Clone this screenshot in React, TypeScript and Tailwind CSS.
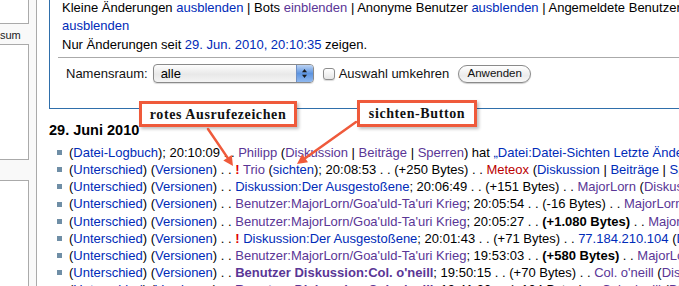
import type { ReactNode } from "react"

const blue = "text-[#002bb8]"
const visited = "text-[#5a3696]"
const red = "text-[#ba0000]"

function A({ children, c = blue, bold = false }: { children: ReactNode; c?: string; bold?: boolean }) {
  return <span className={`${c} ${bold ? "font-bold" : ""}`}>{children}</span>
}

function Bang() {
  return <span className="font-bold text-[#e00000]">!</span>
}

function Row({ children }: { children: ReactNode }) {
  return (
    <li className="flex items-center whitespace-nowrap">
      <span className="mr-[7px] h-[5px] w-[5px] shrink-0 bg-[#6f8ea6]" />
      <span>{children}</span>
    </li>
  )
}

// (Unterschied) (Versionen) . .
function Diff() {
  return (
    <>
      (<A>Unterschied</A>) (<A>Versionen</A>) . .{" "}
    </>
  )
}

function Tools({ c = blue }: { c?: string }) {
  return (
    <>
      (<A c={c}>Diskussion</A> | <A c={c}>Beiträge</A> | <A c={c}>Sperren</A>)
    </>
  )
}

function Callout({ text, className }: { text: string; className: string }) {
  return (
    <div
      className={`absolute flex items-center justify-center border-[3px] border-[#ef5a3b] bg-white shadow-[2px_2px_3px_rgba(0,0,0,0.25)] ${className}`}
    >
      <span className="font-['Liberation_Serif',serif] text-[14px] font-bold tracking-[0.6px] text-[#111]">{text}</span>
    </div>
  )
}

export default function App() {
  return (
    <div className="relative flex h-[286px] w-[679px] overflow-hidden bg-white font-['Liberation_Sans',Arial,sans-serif] text-[13px] text-black">
      {/* sidebar */}
      <div className="w-[37px] shrink-0 border-r border-[#aaa] bg-[#f9f9f9]">
        <div className="h-[24px] w-[29px] border-r border-b border-[#aaa] bg-white" />
        <div className="h-[20px] pt-[4px] text-[11px] leading-[14px] text-[#222]">sum</div>
        <div className="h-[116px] w-[29px] border border-l-0 border-[#aaa] bg-white" />
        <div className="h-[20px]" />
        <div className="h-[120px] w-[29px] border-t border-r border-[#aaa] bg-white" />
      </div>

      {/* content */}
      <div className="min-w-0 flex-1 pl-[12px]">
        <div className="w-[700px] border border-t-0 border-[#2f6fab] pr-2 pb-[25px] pl-[12px]">
          <div className="-mt-px whitespace-nowrap leading-[18px]">
            <div>
              Kleine Änderungen <A>ausblenden</A> | Bots <A c={visited}>einblenden</A> | Anonyme Benutzer{" "}
              <A>ausblenden</A> | Angemeldete Benutzer
            </div>
            <div>
              <A>ausblenden</A>
            </div>
            <div className="mt-px">
              Nur Änderungen seit <A>29. Jun. 2010, 20:10:35</A> zeigen.
            </div>
          </div>
          <div className="mt-[3px] -ml-[4px] h-px bg-[#aaa]" />
          <div className="mt-[6px] ml-[4px] flex h-[19px] items-center">
            <span className="text-[#111]">Namensraum:</span>
            <div className="ml-[5px] flex h-[19px] w-[161px] items-stretch overflow-hidden rounded-[4px] border border-[#8a8a8a] bg-[linear-gradient(#fdfdfd,#e8e8e8_55%,#f4f4f4)] shadow-[0_1px_1px_rgba(0,0,0,0.15)]">
              <span className="flex-1 pl-[7px] text-[13px] leading-[17px]">alle</span>
              <span className="flex w-[17px] items-center justify-center border-l border-[#6f8fc4] bg-[linear-gradient(#bcd3f3,#5d94e0_50%,#8fb8ef)]">
                <svg width="7" height="11" viewBox="0 0 7 11">
                  <path d="M3.5 1 L6 4.2 H1 Z" fill="#1a1a1a" />
                  <path d="M3.5 10 L6 6.8 H1 Z" fill="#1a1a1a" />
                </svg>
              </span>
            </div>
            <span className="ml-[9px] h-[12px] w-[12px] rounded-[3px] border border-[#8d8d8d] bg-[linear-gradient(#fff,#e6e6e6)] shadow-[0_1px_1px_rgba(0,0,0,0.15)]" />
            <span className="ml-[4px] text-[#111]">Auswahl umkehren</span>
            <button className="ml-[9px] flex h-[18px] w-[73px] items-center justify-center rounded-full border border-[#8a8a8a] bg-[linear-gradient(#ffffff,#ececec_60%,#f8f8f8)] text-[11.5px] text-[#111] shadow-[0_1px_1px_rgba(0,0,0,0.2)]">
              Anwenden
            </button>
          </div>
        </div>

        <h4 className="mt-[12px] text-[14.5px] leading-[18px] font-bold">29. Juni 2010</h4>

        <ul className="mt-[5px] ml-[8px] leading-[17.15px]">
          <Row>
            (<A>Datei-Logbuch</A>); 20:10:09 . . <A c={visited}>Philipp</A> <Tools c={visited} /> hat{" "}
            <A>„Datei:Datei-Sichten Letzte Änderungen.png“</A> hochgeladen
          </Row>
          <Row>
            <Diff />
            <Bang /> <A c={visited}>Trio</A> (<A>sichten</A>); 20:08:53 . . (+250 Bytes) . . <A c={red}>Meteox</A>{" "}
            <Tools />
          </Row>
          <Row>
            <Diff />
            <A>Diskussion:Der Ausgestoßene</A>; 20:06:49 . . (+151 Bytes) . . <A c={visited}>MajorLorn</A>{" "}
            <Tools c={visited} />
          </Row>
          <Row>
            <Diff />
            <A c={visited}>Benutzer:MajorLorn/Goa'uld-Ta'uri Krieg</A>; 20:05:54 . . (-16 Bytes) . .{" "}
            <A c={visited}>MajorLorn</A> <Tools c={visited} />
          </Row>
          <Row>
            <Diff />
            <A c={visited}>Benutzer:MajorLorn/Goa'uld-Ta'uri Krieg</A>; 20:05:27 . . <b>(+1.080 Bytes)</b> . .{" "}
            <A c={visited}>MajorLorn</A> <Tools c={visited} />
          </Row>
          <Row>
            <Diff />
            <Bang /> <A>Diskussion:Der Ausgestoßene</A>; 20:01:43 . . (+71 Bytes) . . <A>77.184.210.104</A> <Tools />
          </Row>
          <Row>
            <Diff />
            <A c={visited}>Benutzer:MajorLorn/Goa'uld-Ta'uri Krieg</A>; 19:53:03 . . <b>(+580 Bytes)</b> . .{" "}
            <A c={visited}>MajorLorn</A> <Tools c={visited} />
          </Row>
          <Row>
            <Diff />
            <A c={visited} bold>
              Benutzer Diskussion:Col. o'neill
            </A>
            ; 19:50:15 . . (+70 Bytes) . . <A c={visited}>Col. o'neill</A> <Tools c={visited} />
          </Row>
          <Row>
            <Diff />
            <A c={visited} bold>
              Benutzer Diskussion:Col. o'neill
            </A>
            ; 19:41:30 . . (+104 Bytes) . . <A c={visited}>Col. o'neill</A> <Tools c={visited} />
          </Row>
        </ul>
      </div>

      {/* annotations */}
      <Callout text="rotes Ausrufezeichen" className="top-[101px] left-[139px] h-[26px] w-[158px]" />
      <Callout text="sichten-Button" className="top-[100px] left-[357px] h-[27px] w-[120px]" />
      <svg className="pointer-events-none absolute inset-0" width="679" height="286">
        <g stroke="#ef5a3b" strokeWidth="2.5" fill="#ef5a3b" strokeLinecap="round">
          <line x1="208" y1="129" x2="227.5" y2="157.6" />
          <polygon points="233,166 223.3,160.4 231.7,154.9" stroke="none" />
          <line x1="356" y1="122" x2="305.1" y2="158.2" />
          <polygon points="297,164 302.2,154.1 308,162.3" stroke="none" />
        </g>
      </svg>
    </div>
  )
}
